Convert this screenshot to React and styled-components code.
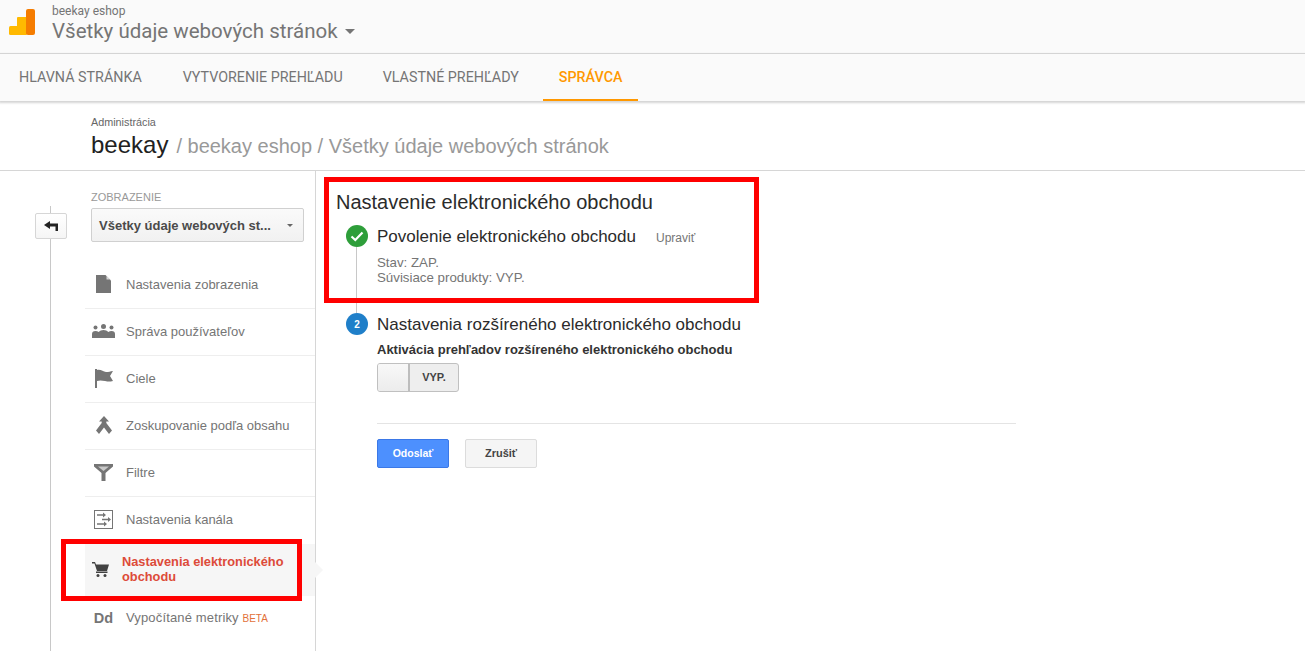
import React from 'react';
import styled, { createGlobalStyle } from 'styled-components';

const GlobalStyle = createGlobalStyle`
  html, body {
    margin: 0;
    padding: 0;
    background: #fff;
    font-family: "Liberation Sans", Arial, sans-serif;
  }
  * { box-sizing: border-box; }
`;

const Page = styled.div`
  position: relative;
  width: 1305px;
  height: 651px;
  overflow: hidden;
  background: #fff;
`;

const TopBar = styled.header`
  height: 54px;
  background: #fafafa;
  border-bottom: 1px solid #e0e0e0;
  display: flex;
  padding-left: 9px;
`;

const Logo = styled.svg`
  width: 26px;
  height: 26px;
  margin-top: 9px;
  margin-right: 17px;
`;

const AccountBlock = styled.div`
  font-family: Roboto, sans-serif;
  color: #757575;
  padding-top: 4px;
`;

const AccountName = styled.div`
  font-size: 12px;
  line-height: 14px;
`;

const ViewName = styled.div`
  font-size: 20.5px;
  line-height: 24px;
  margin-top: 1px;
  display: flex;
  align-items: center;
  gap: 7px;
`;

const Caret = styled.span`
  width: 0;
  height: 0;
  border-left: ${p => p.$size}px solid transparent;
  border-right: ${p => p.$size}px solid transparent;
  border-top: ${p => p.$size}px solid ${p => p.$color};
`;

const NavBar = styled.nav`
  height: 47px;
  background: #fafafa;
  display: flex;
  box-shadow: 0 1px 2px 1px rgba(0, 0, 0, 0.17);
  position: relative;
`;

const NavItem = styled.div`
  font-family: Roboto, sans-serif;
  font-size: 14.3px;
  line-height: 46px;
  height: 47px;
  padding: 0 20px;
  white-space: nowrap;
  font-weight: ${p => (p.$active ? 500 : 400)};
  color: ${p => (p.$active ? '#ff9800' : '#757575')};
  &:first-child { padding: 0 21px 0 19px; }
  ${p => p.$active && 'border-bottom: 2px solid #ff9800; margin-left: 4px; padding: 0 16px;'}
`;

const TitleBlock = styled.div`
  height: 70px;
  padding: 14px 0 0 91px;
  border-bottom: 1px solid #d6d6d6;
`;

const Crumb = styled.div`
  font-size: 10.8px;
  line-height: 14px;
  color: #666;
`;

const TitleLine = styled.div`
  font-size: 20px;
  line-height: 30px;
  margin-top: 1px;
  color: #999;
  white-space: nowrap;
`;

const TitleStrong = styled.span`
  font-size: 24px;
  color: #212121;
  margin-right: 8px;
`;

const Body = styled.div`
  display: grid;
  grid-template-columns: 316px 1fr;
  height: 480px;
`;

const Side = styled.aside`
  position: relative;
  border-right: 1px solid #d6d6d6;
  padding: 20px 0 0 85px;
`;

const Rail = styled.div`
  position: absolute;
  left: 50px;
  top: 35px;
  bottom: 0;
  width: 1px;
  background: #c8c8c8;
`;

const BackButton = styled.div`
  position: absolute;
  left: 35px;
  top: 42px;
  width: 32px;
  height: 26px;
  background: linear-gradient(#fff, #f5f5f5);
  border: 1px solid #d6d6d6;
  border-radius: 2px;
  display: flex;
  align-items: center;
  justify-content: center;
`;

const SideLabel = styled.div`
  font-size: 11px;
  line-height: 13px;
  color: #999;
  margin-left: 6px;
`;

const ViewSelect = styled.div`
  width: 213px;
  height: 34px;
  margin: 4px 0 0 6px;
  padding: 0 10px 0 7px;
  border: 1px solid #d0d0d0;
  border-radius: 2px;
  background: linear-gradient(#fafafa, #f1f1f1);
  display: flex;
  align-items: center;
  justify-content: space-between;
  font-size: 13px;
  font-weight: 700;
  color: #4a4a4a;
  white-space: nowrap;
`;

const Menu = styled.div`
  margin-top: 20px;
`;

const MenuRow = styled.div`
  position: relative;
  height: ${p => (p.$active ? 52 : 47)}px;
  display: flex;
  align-items: center;
  padding-bottom: ${p => p.$lift}px;
  border-bottom: 1px solid ${p => (p.$last || p.$active ? 'transparent' : '#eeeeee')};
  background: ${p => (p.$active ? '#f6f6f6' : 'transparent')};
`;

const MenuIcon = styled.span`
  width: 37px;
  flex: none;
  display: flex;
  justify-content: center;
  margin-right: ${p => (p.$active ? 0 : 4)}px;
  padding-right: ${p => (p.$active ? 6 : 0)}px;
`;

const MenuText = styled.span`
  font-size: ${p => (p.$active ? 12.8 : 13)}px;
  line-height: 15px;
  letter-spacing: ${p => (p.$wide ? 0.15 : 0)}px;
  color: ${p => (p.$active ? '#dd4b39' : '#757575')};
  font-weight: ${p => (p.$active ? 700 : 400)};
`;

const Beta = styled.span`
  font-size: 10px;
  letter-spacing: 0;
  color: #e2713a;
`;

const Pointer = styled.span`
  position: absolute;
  right: -8px;
  top: 18px;
  width: 0;
  height: 0;
  border-top: 8px solid transparent;
  border-bottom: 8px solid transparent;
  border-left: 8px solid #f6f6f6;
`;

const Main = styled.main`
  padding: 20px 0 0 20px;
`;

const MainTitle = styled.h1`
  margin: 0;
  font-size: 20px;
  font-weight: 400;
  line-height: 22px;
  color: #2b2b2b;
`;

const Step = styled.section`
  position: relative;
  display: grid;
  grid-template-columns: 41px 639px;
  margin-top: ${p => p.$top}px;
`;

const StepBadge = styled.div`
  width: 22px;
  height: 22px;
  margin-left: 10px;
  border-radius: 50%;
  background: ${p => p.$color};
  color: #fff;
  font-size: 10px;
  font-weight: 700;
  display: flex;
  align-items: center;
  justify-content: center;
`;

const StepLine = styled.div`
  position: absolute;
  left: 20px;
  top: 22px;
  width: 1px;
  height: 66px;
  background: #c8c8c8;
`;

const StepHead = styled.div`
  display: flex;
  align-items: baseline;
  gap: 20px;
  font-size: 17px;
  line-height: 24px;
  color: #2b2b2b;
  white-space: nowrap;
`;

const EditLink = styled.span`
  font-size: 12px;
  color: #757575;
`;

const StepMeta = styled.div`
  margin-top: 5px;
  font-size: 13.3px;
  line-height: 15px;
  color: #757575;
`;

const OptionLabel = styled.div`
  margin-top: 5px;
  font-size: 13px;
  font-weight: 700;
  line-height: 15px;
  color: #333;
  white-space: nowrap;
`;

const Toggle = styled.div`
  margin-top: 6px;
  width: 82px;
  height: 29px;
  border: 1px solid #c0c0c0;
  border-radius: 3px;
  background: #eeeeee;
  display: flex;
  overflow: hidden;
`;

const ToggleKnob = styled.div`
  width: 32px;
  background: linear-gradient(#f8f8f8, #ececec);
  border-right: 2px solid #bdbdbd;
`;

const ToggleLabel = styled.div`
  flex: 1;
  text-align: center;
  font-size: 11px;
  font-weight: 700;
  line-height: 27px;
  color: #444;
`;

const Divider = styled.div`
  margin-top: 31px;
  height: 1px;
  background: #e4e4e4;
`;

const Actions = styled.div`
  display: flex;
  gap: 16px;
  margin-top: 15px;
`;

const Button = styled.div`
  width: 72px;
  height: 29px;
  border-radius: 2px;
  border: 1px solid ${p => (p.$primary ? '#3b78e7' : '#dcdcdc')};
  background: ${p => (p.$primary ? '#4d90fe' : '#f5f5f5')};
  color: ${p => (p.$primary ? '#fff' : '#444')};
  font-size: ${p => (p.$primary ? 10.5 : 11)}px;
  font-weight: 700;
  line-height: 27px;
  text-align: center;
`;

const RedFrame = styled.div`
  position: absolute;
  left: ${p => p.$x}px;
  top: ${p => p.$y}px;
  width: ${p => p.$w}px;
  height: ${p => p.$h}px;
  border: 5px solid #ff0000;
  pointer-events: none;
`;

const icons = {
  doc: (
    <svg width="15" height="18" viewBox="0 0 15 18">
      <path d="M0 0h9.500L15 5.500V18H0z" fill="#757575" />
      <path d="M10.500 1 14 4.500h-3.500z" fill="#fff" opacity="0.7" />
    </svg>
  ),
  users: (
    <svg width="23" height="14" viewBox="0 0 23 14">
      <g fill="#757575">
        <circle cx="11.500" cy="2.500" r="2.500" />
        <circle cx="3.500" cy="3.500" r="2" />
        <circle cx="19.500" cy="3.500" r="2" />
        <path d="M0 14v-4q0-3 3.500-3 2 0 3 1 2-2 5-2t5 2q1-1 3-1 3.500 0 3.500 3v4z" />
      </g>
    </svg>
  ),
  flag: (
    <svg width="18" height="19" viewBox="0 0 18 19">
      <path d="M0 0h2v19H0zM2 1c4-1 6 2 9 2 3 0 4-.5 7-1l-3 5 3 5c-4 1-5 .5-8 0-3-.5-5-1-8 0z" fill="#757575" />
    </svg>
  ),
  merge: (
    <svg width="16" height="18" viewBox="0 0 16 18">
      <path d="M8 0l5 5.500H10.300V7L16 14.500 13 18 8 11.500 3 18 0 14.500 5.700 7V5.500H3z" fill="#757575" />
    </svg>
  ),
  funnel: (
    <svg width="19" height="17" viewBox="0 0 19 17">
      <path d="M0 0h19v2.500l-7.500 6.500V17h-4V9L0 2.500z" fill="#757575" />
      <path d="M4 2.500h11l-5.500 4.500z" fill="#fff" opacity="0.6" />
    </svg>
  ),
  channel: (
    <svg width="19" height="19" viewBox="0 0 19 19" fill="none">
      <rect x="0.500" y="0.500" width="18" height="18" stroke="#757575" />
      <path d="M3 5h7M15 9.500H8M3 14h8" stroke="#757575" strokeWidth="1.500" />
      <path d="M9 2.500 12 5 9 7.500zM14 7l3 2.500L14 12zM10 11.500 13 14l-3 2.500z" fill="#757575" />
    </svg>
  ),
  cart: (
    <svg width="17" height="15" viewBox="0 0 17 15">
      <g fill="#424242">
        <path d="M0 0h3l1 2.500h13l-2 6.500H5L2.500 1.500H0z" />
        <path d="M4 9.500h11.500V11H4z" />
        <circle cx="6" cy="13.500" r="1.500" />
        <circle cx="13" cy="13.500" r="1.500" />
      </g>
    </svg>
  ),
};

const DdIcon = styled.span`
  font-size: 14.5px;
  font-weight: 700;
  color: #757575;
`;

const menuItems = [
  { id: 'doc', label: 'Nastavenia zobrazenia' },
  { id: 'users', label: 'Správa používateľov' },
  { id: 'flag', label: 'Ciele' },
  { id: 'merge', label: 'Zoskupovanie podľa obsahu' },
  { id: 'funnel', label: 'Filtre' },
  { id: 'channel', label: 'Nastavenia kanála', plain: true },
];

export default function App() {
  return (
    <Page>
      <GlobalStyle />
      <TopBar>
        <Logo viewBox="0 0 26 26">
          <rect x="0" y="17" width="10" height="9" rx="1.500" fill="#ffb900" />
          <rect x="8" y="8" width="10" height="18" rx="1" fill="#ffb900" />
          <rect x="17" y="0" width="9" height="26" rx="2" fill="#f57c00" />
        </Logo>
        <AccountBlock>
          <AccountName>beekay eshop</AccountName>
          <ViewName>
            Všetky údaje webových stránok
            <Caret $size={5} $color="#757575" />
          </ViewName>
        </AccountBlock>
      </TopBar>
      <NavBar>
        <NavItem>HLAVNÁ STRÁNKA</NavItem>
        <NavItem>VYTVORENIE PREHĽADU</NavItem>
        <NavItem>VLASTNÉ PREHĽADY</NavItem>
        <NavItem $active>SPRÁVCA</NavItem>
      </NavBar>
      <TitleBlock>
        <Crumb>Administrácia</Crumb>
        <TitleLine>
          <TitleStrong>beekay</TitleStrong>/ beekay eshop / Všetky údaje webových stránok
        </TitleLine>
      </TitleBlock>
      <Body>
        <Side>
          <Rail />
          <BackButton>
            <svg width="14" height="10" viewBox="0 0 14 10">
              <path d="M0 4 6 0v2.500h8V10h-2.500V5.500H6V8z" fill="#222" />
            </svg>
          </BackButton>
          <SideLabel>ZOBRAZENIE</SideLabel>
          <ViewSelect>
            Všetky údaje webových st...
            <Caret $size={3.5} $color="#666" />
          </ViewSelect>
          <Menu>
            {menuItems.map(item => (
              <MenuRow key={item.id} $last={item.plain} $lift={2}>
                <MenuIcon>{icons[item.id]}</MenuIcon>
                <MenuText>{item.label}</MenuText>
              </MenuRow>
            ))}
            <MenuRow $active $lift={1}>
              <MenuIcon $active>{icons.cart}</MenuIcon>
              <MenuText $active>
                Nastavenia elektronického
                <br />
                obchodu
              </MenuText>
              <Pointer />
            </MenuRow>
            <MenuRow $last $lift={2}>
              <MenuIcon>
                <DdIcon>Dd</DdIcon>
              </MenuIcon>
              <MenuText $wide>
                Vypočítané metriky <Beta>BETA</Beta>
              </MenuText>
            </MenuRow>
          </Menu>
        </Side>
        <Main>
          <MainTitle>Nastavenie elektronického obchodu</MainTitle>
          <Step $top={12}>
            <StepLine />
            <StepBadge $color="#2e9e3a">
              <svg width="14" height="11" viewBox="0 0 14 11" fill="none">
                <path d="M1.500 5.500 5.300 9 12.500 1.500" stroke="#fff" strokeWidth="2.200" />
              </svg>
            </StepBadge>
            <div>
              <StepHead>
                Povolenie elektronického obchodu
                <EditLink>Upraviť</EditLink>
              </StepHead>
              <StepMeta>
                Stav: ZAP.
                <br />
                Súvisiace produkty: VYP.
              </StepMeta>
            </div>
          </Step>
          <Step $top={28}>
            <StepBadge $color="#1f7fc9">2</StepBadge>
            <div>
              <StepHead>Nastavenia rozšíreného elektronického obchodu</StepHead>
              <OptionLabel>Aktivácia prehľadov rozšíreného elektronického obchodu</OptionLabel>
              <Toggle>
                <ToggleKnob />
                <ToggleLabel>VYP.</ToggleLabel>
              </Toggle>
              <Divider />
              <Actions>
                <Button $primary>Odoslať</Button>
                <Button>Zrušiť</Button>
              </Actions>
            </div>
          </Step>
        </Main>
      </Body>
      <RedFrame $x={324} $y={177} $w={435} $h={126} />
      <RedFrame $x={61} $y={539} $w={241} $h={62} />
    </Page>
  );
}
